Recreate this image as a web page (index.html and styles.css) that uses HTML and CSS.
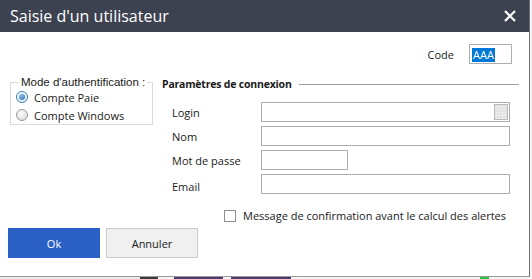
FILE: index.html
```html
<!DOCTYPE html>
<html lang="fr">
<head>
  <meta charset="UTF-8" />
  <title>Saisie d'un utilisateur</title>
  <link rel="stylesheet" href="styles.css">
</head>
<body>
  <div class="dialog">
    <div class="titlebar">
      <span class="title">Saisie d'un utilisateur</span>
      <svg class="close" width="12" height="12" viewBox="0 0 12 12">
        <path d="M1 1 L11 11 M11 1 L1 11" stroke="#fff" stroke-width="2.2" fill="none"/>
      </svg>
    </div>

    <div class="content">
      <div class="code-row">
        <span class="code-label">Code</span>
        <div class="field code-field"><span class="selected">AAA</span></div>
      </div>

      <div class="main">
        <fieldset class="auth">
          <legend>Mode d'authentification :</legend>
          <label class="radio"><span class="dot checked"></span>Compte Paie</label>
          <label class="radio"><span class="dot"></span>Compte Windows</label>
        </fieldset>

        <div class="conn">
          <div class="conn-head">
            <span>Paramètres de connexion</span>
            <span class="rule"></span>
          </div>
          <div class="rows">
            <span class="lbl">Login</span>
            <div class="field wide login">
              <span class="pick"></span>
            </div>
            <span class="lbl">Nom</span>
            <div class="field wide"></div>
            <span class="lbl">Mot de passe</span>
            <div class="field short"></div>
            <span class="lbl lbl-low">Email</span>
            <div class="field wide"></div>
          </div>
        </div>
      </div>

      <div class="check-row">
        <span class="box"></span>
        <span>Message de confirmation avant le calcul des alertes</span>
      </div>

      <div class="buttons">
        <button class="btn primary">Ok</button>
        <button class="btn">Annuler</button>
      </div>
    </div>
  </div>

  <div class="taskbar">
    <span class="seg s1"></span>
    <span class="seg s2"></span>
    <span class="seg s3"></span>
    <span class="seg s4"></span>
    <span class="seg s5"></span>
    <span class="seg s6"></span>
  </div>
</body>
</html>
```

FILE: styles.css
```css
html, body {
  margin: 0;
  padding: 0;
  height: 100%;
  overflow: hidden;
  background: #f4f4f4;
  font-family: "Open Sans", "Noto Sans", sans-serif;
  font-size: 11px;
  color: #1a1a1a;
}

.dialog {
  width: 530px;
  height: 277px;
  box-sizing: border-box;
  background: #fff;
  border-right: 1px solid #707070;
  border-bottom: 1px solid #9a9a9a;
}

.titlebar {
  height: 32px;
  background: #3d4251;
  display: flex;
  align-items: center;
  justify-content: space-between;
  padding: 0 13px 0 10px;
}

.title {
  color: #fff;
  font-size: 16px;
}

.content {
  display: flex;
  flex-direction: column;
}

.code-row {
  display: flex;
  justify-content: flex-end;
  align-items: center;
  gap: 15px;
  margin-top: 12px;
  padding-right: 17px;
}

.field {
  height: 20px;
  box-sizing: border-box;
  border: 1px solid #abadb3;
  background: #fff;
}

.code-field {
  width: 43px;
  padding: 2px 0 0 2px;
}

.selected {
  background: #0078d7;
  color: #fff;
  line-height: 14px;
  display: inline-block;
  padding: 0 1px;
}

.main {
  display: flex;
  margin-top: 12px;
  padding-left: 10px;
  gap: 9px;
}

.auth {
  margin: 0;
  width: 143px;
  align-self: flex-start;
  box-sizing: border-box;
  border: 1px solid #dcdcdc;
  padding: 0 4px 0 5px;
  display: flex;
  flex-direction: column;
}

.auth legend {
  padding: 0 2px;
  margin-left: 3px;
  line-height: 12px;
  white-space: nowrap;
  font-family: "Liberation Sans", Arial, sans-serif;
  font-size: 11.5px;
}

.radio {
  display: flex;
  align-items: center;
  gap: 6px;
  height: 18px;
}

.dot {
  width: 10px;
  height: 10px;
  border-radius: 50%;
  border: 1px solid #9b9b9b;
  background: radial-gradient(circle at 40% 35%, #fdfdfd, #d6d6d6);
  display: inline-flex;
  align-items: center;
  justify-content: center;
}

.dot.checked {
  border-color: #3c7fb1;
  background: radial-gradient(circle at 40% 35%, #fff, #dbe9f5);
}

.dot.checked::after {
  content: "";
  width: 6px;
  height: 6px;
  border-radius: 50%;
  background: radial-gradient(circle at 40% 35%, #8fc3f2, #1d5fae);
}

.conn {
  flex: 1;
  padding-right: 10px;
}

.conn-head {
  display: flex;
  align-items: center;
  gap: 7px;
  font-weight: bold;
  font-size: 10.5px;
  letter-spacing: -0.2px;
  line-height: 16px;
}

.rule {
  flex: 1;
  border-top: 1px solid #a0a0a0;
}

.rows {
  display: grid;
  grid-template-columns: 89px 1fr;
  row-gap: 4px;
  align-items: center;
  margin-top: 10px;
  padding-left: 10px;
  padding-right: 9px;
}

.lbl-low {
  padding-top: 5px;
}

.short {
  width: 87px;
}

.login {
  display: flex;
  justify-content: flex-end;
  padding: 1px;
}

.pick {
  width: 14px;
  height: 16px;
  box-sizing: border-box;
  border: 1px solid #b9b9b9;
  background: #e3e3e3;
  background-image: radial-gradient(#fafafa 0.6px, transparent 0.8px);
  background-size: 3px 3px;
}

.check-row {
  display: flex;
  align-items: center;
  gap: 7px;
  margin-top: 14px;
  padding-left: 224px;
}

.box {
  width: 12px;
  height: 12px;
  box-sizing: border-box;
  border: 1px solid #8f8f8f;
  background: #fff;
}

.buttons {
  display: flex;
  gap: 6px;
  margin-top: 5px;
  padding-left: 8px;
}

.btn {
  width: 92px;
  height: 30px;
  font-family: inherit;
  font-size: 11px;
  color: #1a1a1a;
  background: #f0f0f0;
  border: 1px solid #cdcdcd;
  padding: 0;
}

.btn.primary {
  background: #2a5fc6;
  border-color: #2a5fc6;
  color: #fff;
}

.taskbar {
  display: flex;
  height: 2px;
}

.seg { height: 2px; }
.s1 { width: 140px; background: #e9e9e9; }
.s2 { width: 18px; background: #3a3a3a; margin-right: 16px; }
.s3 { width: 49px; background: #4b3b6c; margin-right: 8px; }
.s4 { width: 60px; background: #4b3b6c; margin-right: 189px; }
.s5 { width: 9px; background: #2bc43a; }
.s6 { flex: 1; background: #f4f4f4; }
```
